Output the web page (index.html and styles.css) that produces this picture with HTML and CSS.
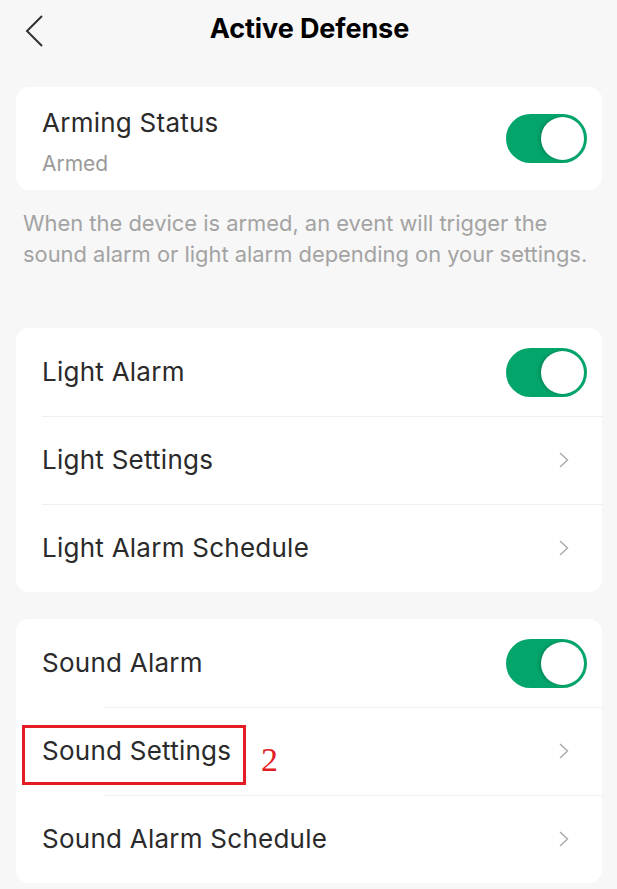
FILE: index.html
```html
<!DOCTYPE html>
<html lang="en">
<head>
<meta charset="utf-8">
<title>Active Defense</title>
<link rel="stylesheet" href="styles.css">
</head>
<body>
<header class="topbar">
  <button class="back" aria-label="Back">
    <svg width="20" height="32" viewBox="0 0 20 32"><path d="M18 1 L3 16 L18 31" fill="none" stroke="#333" stroke-width="2"/></svg>
  </button>
  <h1 class="title">Active Defense</h1>
</header>

<main class="content">
  <section class="card card-status">
    <div class="status-text">
      <div class="row-label">Arming Status</div>
      <div class="row-sub">Armed</div>
    </div>
    <span class="toggle on"><span class="knob"></span></span>
  </section>

  <p class="note">When the device is armed, an event will trigger the sound alarm or light alarm depending on your settings.</p>

  <section class="card card-list light">
    <div class="row">
      <span class="row-label">Light Alarm</span>
      <span class="toggle on"><span class="knob"></span></span>
    </div>
    <div class="row">
      <span class="row-label">Light Settings</span>
      <svg class="chev" width="10" height="16" viewBox="0 0 10 16"><path d="M1 1 L8.5 8 L1 15" fill="none" stroke="#aaa" stroke-width="1.4"/></svg>
    </div>
    <div class="row">
      <span class="row-label">Light Alarm Schedule</span>
      <svg class="chev" width="10" height="16" viewBox="0 0 10 16"><path d="M1 1 L8.5 8 L1 15" fill="none" stroke="#aaa" stroke-width="1.4"/></svg>
    </div>
  </section>

  <section class="card card-list sound">
    <div class="row">
      <span class="row-label">Sound Alarm</span>
      <span class="toggle on"><span class="knob"></span></span>
    </div>
    <div class="row marked">
      <span class="row-label">Sound Settings</span>
      <span class="mark-box"></span>
      <span class="mark-num">2</span>
      <svg class="chev" width="10" height="16" viewBox="0 0 10 16"><path d="M1 1 L8.5 8 L1 15" fill="none" stroke="#aaa" stroke-width="1.4"/></svg>
    </div>
    <div class="row">
      <span class="row-label">Sound Alarm Schedule</span>
      <svg class="chev" width="10" height="16" viewBox="0 0 10 16"><path d="M1 1 L8.5 8 L1 15" fill="none" stroke="#aaa" stroke-width="1.4"/></svg>
    </div>
  </section>
</main>
</body>
</html>
```

FILE: styles.css
```css
* { box-sizing: border-box; }

html, body {
  margin: 0;
  padding: 0;
  background: #f7f7f7;
}

body {
  width: 617px;
  height: 889px;
  overflow: hidden;
  font-family: Inter, "Noto Sans", "Liberation Sans", sans-serif;
  color: #222;
}

/* top navigation */
.topbar {
  height: 56px;
  display: flex;
  align-items: center;
  justify-content: center;
  position: relative;
}

.back {
  position: absolute;
  left: 24px;
  top: 15px;
  padding: 0;
  border: 0;
  background: none;
  display: flex;
}

.title {
  margin: 0;
  font-size: 27px;
  font-weight: 700;
  color: #000;
  letter-spacing: -0.1px;
  transform: translate(1px, 0);
}

.content {
  padding: 0 15px 0 16px;
}

/* cards */
.card {
  background: #fff;
  border-radius: 13px;
}

.card-status {
  margin-top: 31px;
  height: 103px;
  display: flex;
  align-items: center;
  justify-content: space-between;
  padding: 0 15px 0 26px;
}

.status-text {
  display: flex;
  flex-direction: column;
  gap: 13px;
  margin-top: 8px;
}

.row-label {
  font-size: 26px;
  line-height: 30px;
  letter-spacing: 0.25px;
  color: #2a2a2a;
}

.row-sub {
  font-size: 21px;
  line-height: 26px;
  color: #9a9a9a;
}

.note {
  margin: 18px 0 0 7px;
  font-size: 21.9px;
  line-height: 31px;
  color: #a3a3a3;
}

.card-list.light { margin-top: 58px; }
.card-list.sound { margin-top: 27px; }

.row {
  height: 88px;
  display: flex;
  align-items: center;
  justify-content: space-between;
  padding: 0 15px 0 26px;
  position: relative;
}

.row + .row::before {
  content: "";
  position: absolute;
  top: 0;
  left: 26px;
  right: 0;
  height: 1px;
  background: #efefef;
}

.sound .row + .row::before { left: 89px; }

.chev { margin-right: 18px; }

/* switch */
.toggle {
  width: 81px;
  height: 49px;
  border-radius: 25px;
  background: #04a56b;
  display: flex;
  align-items: center;
  justify-content: flex-end;
  padding-right: 3px;
}

.knob {
  width: 43px;
  height: 43px;
  border-radius: 50%;
  background: #fff;
  box-shadow: -2px 0 3px rgba(0, 60, 30, 0.25);
}

/* annotation over the settings row */
.mark-box {
  position: absolute;
  left: 6px;
  top: 18px;
  width: 224px;
  height: 60px;
  border: 3px solid #e41d25;
}

.mark-num {
  position: absolute;
  left: 245px;
  top: 28px;
  font-family: "Liberation Serif", serif;
  font-size: 34px;
  line-height: 50px;
  color: #e41d25;
}
```
